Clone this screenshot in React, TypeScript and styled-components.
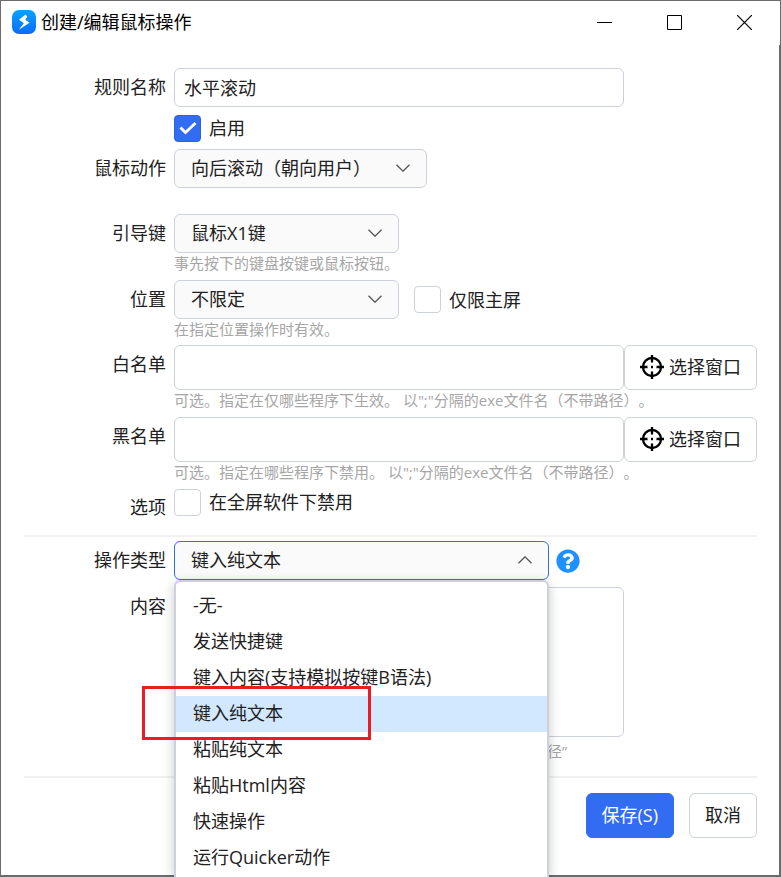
import React from "react";
import styled, { createGlobalStyle, css } from "styled-components";
import { FaQuestionCircle } from "react-icons/fa";

const GlobalStyle = createGlobalStyle`
  *, *::before, *::after { box-sizing: border-box; }
  body { margin: 0; background: #fff; text-spacing-trim: space-all; }
  body, button, input, select, textarea {
    font-family: "Open Sans", "Noto Sans CJK SC", sans-serif;
    font-size: 18px;
    line-height: 24px;
    color: #212121;
  }
`;

const Window = styled.main`
  display: flex;
  flex-direction: column;
  min-height: 100vh;
  border: 1px solid #6b6b6b;
  border-bottom-width: 2px;
  background: #fff;
`;

const TitleBar = styled.header`
  display: flex;
  align-items: center;
  height: 44px;
  padding: 0 1px 2px 11px;
`;

const Title = styled.h1`
  flex: 1;
  margin: 0 0 0 5px;
  font-size: 18px;
  font-weight: 400;
  color: #000;
`;

const CaptionButton = styled.button`
  display: flex;
  align-items: center;
  justify-content: center;
  width: 70px;
  height: 42px;
  padding: 0;
  border: 0;
  background: transparent;
`;

const Form = styled.form`
  flex: 1;
  padding: 23px 22px 36px 23px;
  border-right: 1px solid #6b6b6b;
`;

const Row = styled.div<{ $gap?: number }>`
  display: grid;
  grid-template-columns: 142px minmax(0, 1fr) 133px;
  align-items: start;
  margin-top: ${(p) => p.$gap ?? 0}px;
`;

const labelText = css`
  text-align: right;
  line-height: 39px;
  color: #212121;
`;

const Label = styled.label`
  ${labelText}
`;

const LabelSpan = styled.span`
  ${labelText}
`;

const Field = styled.div<{ $wide?: boolean }>`
  padding-left: 8px;
  grid-column: ${(p) => (p.$wide ? "2 / -1" : "2")};
`;

const Inline = styled.div<{ $gap: number }>`
  display: flex;
  align-items: center;
  gap: ${(p) => p.$gap}px;
`;

const box = css`
  border: 1px solid #cdd2da;
  border-radius: 6px;
  background: #fff;
  outline: none;
`;

const TextInput = styled.input<{ $tall?: boolean }>`
  ${box}
  display: block;
  width: 100%;
  height: ${(p) => (p.$tall ? 45 : 39)}px;
  padding: 0 9px 2px;
`;

const TextArea = styled.textarea`
  ${box}
  display: block;
  width: 100%;
  height: 150px;
  padding: 8px 9px;
  resize: none;
`;

const SelectShell = styled.div<{ $width: number }>`
  display: grid;
  align-items: center;
  width: ${(p) => p.$width}px;
  position: relative;
`;

const NativeSelect = styled.select<{ $open?: boolean }>`
  ${box}
  grid-area: 1 / 1;
  appearance: none;
  width: 100%;
  height: 39px;
  padding: 0 40px 2px 16px;
  background: #fafafa;
  border-color: ${(p) => (p.$open ? "#326cf3" : "#cdd2da")};
`;

const Chevron = styled.svg`
  grid-area: 1 / 1;
  justify-self: end;
  margin: 0 17px 1px 0;
  pointer-events: none;
`;

const Help = styled.p`
  margin: 0;
  font-size: 15px;
  line-height: 20px;
  color: #a6a6a6;
  white-space: pre;
`;

const ContentHelp = styled(Help)`
  padding: 4px 0 0 373px;
`;

const CheckLabel = styled.label`
  display: flex;
  align-items: center;
  gap: 8px;
  height: 28px;
`;

const CheckShell = styled.span`
  display: grid;
  place-items: center;
`;

const CheckInput = styled.input`
  grid-area: 1 / 1;
  appearance: none;
  width: 27px;
  height: 27px;
  margin: 0;
  border: 1px solid #cdd2da;
  border-radius: 4px;
  background: #fff;
  &:checked {
    border-color: #2b62e0;
    background: #326cf3;
  }
  & + svg { visibility: hidden; }
  &:checked + svg { visibility: visible; }
`;

const Tick = styled.svg`
  grid-area: 1 / 1;
  pointer-events: none;
`;

const Button = styled.button<{ $primary?: boolean }>`
  ${box}
  display: flex;
  align-items: center;
  justify-content: center;
  gap: 5px;
  height: 45px;
  padding: 0 15px 1px;
  white-space: nowrap;
  ${(p) =>
    p.$primary &&
    css`
      background: #326cf3;
      border-color: #326cf3;
      color: #fff;
    `}
`;

const Divider = styled.hr<{ $gap: number }>`
  height: 2px;
  margin: ${(p) => p.$gap}px 0 0;
  border: 0;
  background: #f1f1f1;
`;

const HelpButton = styled.button`
  display: flex;
  padding: 0;
  border: 0;
  background: none;
  color: #1e90ff;
`;

const Actions = styled.footer`
  display: flex;
  justify-content: flex-end;
  gap: 15px;
  margin-top: 15px;
`;

const Menu = styled.ul`
  position: absolute;
  z-index: 2;
  top: 100%;
  left: 0;
  width: 100%;
  height: 297px;
  margin: 0;
  padding: 6px 0 0;
  list-style: none;
  border: 2px solid #cdd2da;
  border-bottom: 0;
  border-radius: 6px 6px 0 0;
  background: #fff;
  box-shadow: 0 3px 12px rgba(0, 0, 0, 0.22);
`;

const Option = styled.li`
  position: relative;
  height: 36px;
  padding-left: 17px;
  line-height: 34px;
  &[aria-selected="true"] { background: #d1e8ff; }
`;

const Highlight = styled.span`
  position: absolute;
  z-index: 3;
  top: -10px;
  left: -34px;
  width: 229px;
  height: 54px;
  border: 3px solid #ed1c24;
  pointer-events: none;
`;

const AppIcon = () => (
  <svg width="24" height="24" viewBox="0 0 24 24" aria-hidden="true">
    <defs>
      <linearGradient id="appBlue" x1="0" y1="0" x2="0" y2="1">
        <stop offset="0" stopColor="#0aa2ff" />
        <stop offset="1" stopColor="#0a6cff" />
      </linearGradient>
    </defs>
    <rect width="24" height="24" rx="7" fill="url(#appBlue)" />
    <path d="M13.500 4.500 7 9.800l4.800 3.400L6.800 19.800 17.500 12.800 13.300 9.800 15.300 6.500z" fill="#fff" />
  </svg>
);

const Target = () => (
  <svg width="24" height="24" viewBox="0 0 24 24" fill="none" stroke="#000" strokeWidth="2.300" aria-hidden="true">
    <circle cx="12" cy="12" r="9" />
    <path d="M12 0v7.500M12 16.500V24M0 12h7.500M16.500 12H24" />
    <path d="M11 12h2" />
  </svg>
);

type SelectProps = {
  id: string;
  value: string;
  width: number;
  open?: boolean;
  children?: React.ReactNode;
};

const Select = ({ id, value, width, open, children }: SelectProps) => (
  <SelectShell $width={width}>
    <NativeSelect id={id} $open={open} defaultValue={value}>
      <option>{value}</option>
    </NativeSelect>
    <Chevron width="14" height="8" viewBox="0 0 14 8" fill="none" stroke="#555" strokeWidth="1.300" aria-hidden="true">
      <path d={open ? "M.5 7.300 7 .8l6.500 6.500" : "M.5.7 7 7.200 13.500.7"} />
    </Chevron>
    {children}
  </SelectShell>
);

const Check = ({ text, checked }: { text: string; checked?: boolean }) => (
  <CheckLabel>
    <CheckShell>
      <CheckInput type="checkbox" defaultChecked={checked} />
      <Tick width="18" height="14" viewBox="0 0 18 14" fill="none" stroke="#fff" strokeWidth="2.800" aria-hidden="true">
        <path d="m1.500 6.500 5 5L16.500 2" />
      </Tick>
    </CheckShell>
    {text}
  </CheckLabel>
);

const PickWindow = () => (
  <Button type="button">
    <Target />
    选择窗口
  </Button>
);

const actions = [
  "-无-",
  "发送快捷键",
  "键入内容(支持模拟按键B语法)",
  "键入纯文本",
  "粘贴纯文本",
  "粘贴Html内容",
  "快速操作",
  "运行Quicker动作",
];
const currentAction = "键入纯文本";

export default function App() {
  return (
    <>
      <GlobalStyle />
      <Window>
        <TitleBar>
          <AppIcon />
          <Title>创建/编辑鼠标操作</Title>
          <CaptionButton aria-label="最小化">
            <svg width="15" height="15" stroke="#000"><path d="M0 7.500h15" /></svg>
          </CaptionButton>
          <CaptionButton aria-label="最大化">
            <svg width="15" height="15" stroke="#000" fill="none"><path d="M.5.5h14v14H.5z" /></svg>
          </CaptionButton>
          <CaptionButton aria-label="关闭">
            <svg width="15" height="15" stroke="#000" strokeWidth="1.200"><path d="m0 0 15 15M15 0 0 15" /></svg>
          </CaptionButton>
        </TitleBar>
        <Form onSubmit={(e) => e.preventDefault()}>
          <Row>
            <Label htmlFor="name">规则名称</Label>
            <Field><TextInput id="name" defaultValue="水平滚动" /></Field>
          </Row>
          <Row $gap={7}>
            <Field><Check text="启用" checked /></Field>
          </Row>
          <Row $gap={7}>
            <Label htmlFor="gesture">鼠标动作</Label>
            <Field><Select id="gesture" value="向后滚动（朝向用户）" width={253} /></Field>
          </Row>
          <Row $gap={26}>
            <Label htmlFor="lead">引导键</Label>
            <Field>
              <Select id="lead" value="鼠标X1键" width={225} />
              <Help>事先按下的键盘按键或鼠标按钮。</Help>
            </Field>
          </Row>
          <Row $gap={7}>
            <Label htmlFor="place">位置</Label>
            <Field>
              <Inline $gap={15}>
                <Select id="place" value="不限定" width={225} />
                <Check text="仅限主屏" />
              </Inline>
              <Help>在指定位置操作时有效。</Help>
            </Field>
          </Row>
          <Row $gap={6}>
            <Label htmlFor="allow">白名单</Label>
            <Field>
              <TextInput id="allow" $tall />
              <Help>可选。指定在仅哪些程序下生效。 以";"分隔的exe文件名（不带路径）。</Help>
            </Field>
            <PickWindow />
          </Row>
          <Row $gap={7}>
            <Label htmlFor="deny">黑名单</Label>
            <Field>
              <TextInput id="deny" $tall />
              <Help>可选。指定在哪些程序下禁用。 以";"分隔的exe文件名（不带路径）。</Help>
            </Field>
            <PickWindow />
          </Row>
          <Row $gap={6}>
            <LabelSpan>选项</LabelSpan>
            <Field><Check text="在全屏软件下禁用" /></Field>
          </Row>
          <Divider $gap={8} />
          <Row $gap={4}>
            <Label htmlFor="kind">操作类型</Label>
            <Field $wide>
              <Inline $gap={7}>
                <Select id="kind" value={currentAction} width={375} open>
                  <Menu role="listbox" aria-label="操作类型">
                    {actions.map((name) => (
                      <Option key={name} role="option" aria-selected={name === currentAction}>
                        {name}
                        {name === currentAction && <Highlight />}
                      </Option>
                    ))}
                  </Menu>
                </Select>
                <HelpButton type="button" aria-label="帮助"><FaQuestionCircle size={24} /></HelpButton>
              </Inline>
            </Field>
          </Row>
          <Row $gap={7}>
            <Label htmlFor="content">内容</Label>
            <Field>
              <TextArea id="content" />
              <ContentHelp>径”</ContentHelp>
            </Field>
          </Row>
          <Divider $gap={15} />
          <Actions>
            <Button type="submit" $primary>保存(S)</Button>
            <Button type="button">取消</Button>
          </Actions>
        </Form>
      </Window>
    </>
  );
}
